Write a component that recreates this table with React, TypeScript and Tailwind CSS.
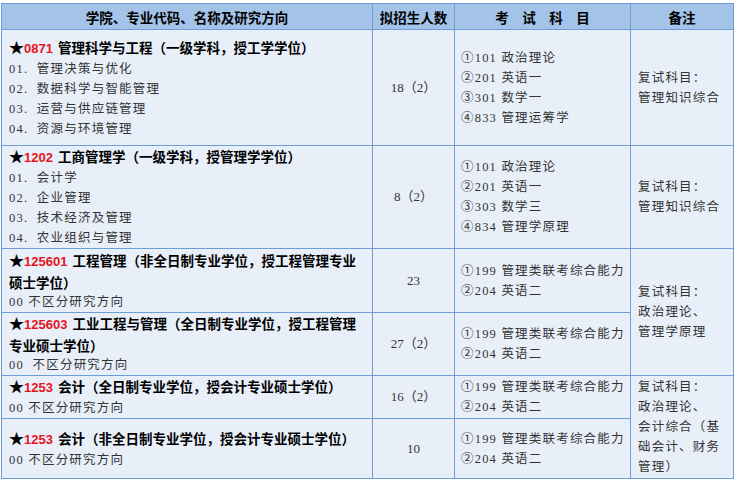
import React from 'react';

interface Program {
  code: string;
  title: string[];
  items: string[];
  count: string;
  exams: string[];
  h: string;
}

const PROGRAMS: Program[] = [
  {
    code: '0871',
    title: ['管理科学与工程（一级学科，授工学学位）'],
    items: ['01.  管理决策与优化', '02.  数据科学与智能管理', '03.  运营与供应链管理', '04.  资源与环境管理'],
    count: '18（2）',
    exams: ['①101 政治理论', '②201 英语一', '③301 数学一', '④833 管理运筹学'],
    h: 'h-[116px]',
  },
  {
    code: '1202',
    title: ['工商管理学（一级学科，授管理学学位）'],
    items: ['01.  会计学', '02.  企业管理', '03.  技术经济及管理', '04.  农业组织与管理'],
    count: '8（2）',
    exams: ['①101 政治理论', '②201 英语一', '③303 数学三', '④834 管理学原理'],
    h: 'h-[103px]',
  },
  {
    code: '125601',
    title: ['工程管理（非全日制专业学位，授工程管理专业', '硕士学位）'],
    items: ['00 不区分研究方向'],
    count: '23',
    exams: ['①199 管理类联考综合能力', '②204 英语二'],
    h: 'h-[64px]',
  },
  {
    code: '125603',
    title: ['工业工程与管理（全日制专业学位，授工程管理', '专业硕士学位）'],
    items: ['00  不区分研究方向'],
    count: '27（2）',
    exams: ['①199 管理类联考综合能力', '②204 英语二'],
    h: 'h-[63px]',
  },
  {
    code: '1253',
    title: ['会计（全日制专业学位，授会计专业硕士学位）'],
    items: ['00 不区分研究方向'],
    count: '16（2）',
    exams: ['①199 管理类联考综合能力', '②204 英语二'],
    h: 'h-[43px]',
  },
  {
    code: '1253',
    title: ['会计（非全日制专业学位，授会计专业硕士学位）'],
    items: ['00 不区分研究方向'],
    count: '10',
    exams: ['①199 管理类联考综合能力', '②204 英语二'],
    h: 'h-[60px]',
  },
];

const NOTES: Record<number, { span: number; lines: string[] }> = {
  0: { span: 1, lines: ['复试科目：', '管理知识综合'] },
  1: { span: 1, lines: ['复试科目：', '管理知识综合'] },
  2: { span: 2, lines: ['复试科目：', '政治理论、', '管理学原理'] },
  4: { span: 2, lines: ['复试科目：', '政治理论、', '会计综合（基', '础会计、财务', '管理）'] },
};

const cell = 'border border-[#6d9ed8] align-middle';
const plain = "font-['Liberation_Serif','Noto_Sans_CJK_SC',serif] text-[12.5px] tracking-[1.2px] text-[#333] leading-[20px]";
const bold = "font-['Noto_Sans_CJK_SC',sans-serif] font-bold text-[13.5px] text-black leading-[20px]";

export default function App() {
  return (
    <div className="w-[737px] h-[481px] bg-white pt-[3px] pl-px">
      <table className="border-collapse table-fixed w-[732px] bg-[#e9eff9]">
        <colgroup>
          <col className="w-[371px]" />
          <col className="w-[82px]" />
          <col className="w-[176px]" />
          <col className="w-[103px]" />
        </colgroup>
        <thead>
          <tr className="h-[26px] bg-[#a3c3e9]">
            <th className={`${cell} ${bold} text-center`}>学院、专业代码、名称及研究方向</th>
            <th className={`${cell} ${bold} text-center`}>拟招生人数</th>
            <th className={`${cell} ${bold} text-center`}>考　试　科　目</th>
            <th className={`${cell} ${bold} text-center`}>备注</th>
          </tr>
        </thead>
        <tbody>
          {PROGRAMS.map((p, i) => (
            <tr key={i} className={p.h}>
              <td className={`${cell} pl-[7px] pr-1`}>
                {p.title.map((line, j) => (
                  <div key={j} className={`${bold} whitespace-nowrap`}>
                    {j === 0 && (
                      <>
                        <span className="text-[15px]">★</span>
                        <span className="font-['Liberation_Sans',sans-serif] text-[13px] text-[#e8141c] mr-[5px]">{p.code}</span>
                      </>
                    )}
                    {line}
                  </div>
                ))}
                {p.items.map((it) => (
                  <div key={it} className={`${plain} whitespace-pre`}>
                    {it}
                  </div>
                ))}
              </td>
              <td className={`${cell} ${plain} text-center tracking-normal text-[13px]`}>{p.count}</td>
              <td className={`${cell} pl-[6px]`}>
                {p.exams.map((e) => (
                  <div key={e} className={`${plain} whitespace-nowrap`}>
                    {e}
                  </div>
                ))}
              </td>
              {NOTES[i] && (
                <td rowSpan={NOTES[i].span} className={`${cell} pl-[7px]`}>
                  {NOTES[i].lines.map((l) => (
                    <div key={l} className={`${plain} whitespace-nowrap`}>
                      {l}
                    </div>
                  ))}
                </td>
              )}
            </tr>
          ))}
        </tbody>
      </table>
    </div>
  );
}
